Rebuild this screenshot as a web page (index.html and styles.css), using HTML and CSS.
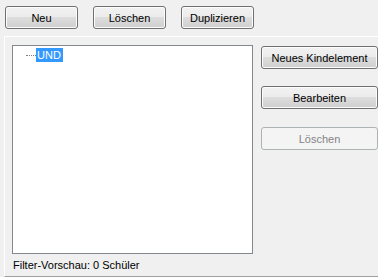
FILE: index.html
```html
<!DOCTYPE html>
<html lang="de">
<head>
  <meta charset="UTF-8">
  <title>Filter</title>
  <link rel="stylesheet" href="styles.css">
</head>
<body>
<div class="toolbar">
  <button class="btn btn-small" type="button">Neu</button>
  <button class="btn btn-small" type="button">Löschen</button>
  <button class="btn btn-small" type="button">Duplizieren</button>
</div>
<div class="group">
  <div class="main">
    <div class="tree">
      <div class="node">
        <span class="dots"></span>
        <span class="selected">UND</span>
      </div>
    </div>
    <div class="actions">
      <button class="btn" type="button">Neues Kindelement</button>
      <button class="btn" type="button">Bearbeiten</button>
      <button class="btn" type="button" disabled>Löschen</button>
    </div>
  </div>
  <div class="preview">
    <span class="preview-label">Filter-Vorschau:</span><span>0 Schüler</span>
  </div>
</div>
</body>
</html>
```

FILE: styles.css
```css
html,
body {
  margin: 0;
  height: 277px;
  overflow: hidden;
}

body {
  background: #f0f0f0;
  font-family: 'Liberation Sans', Arial, sans-serif;
  font-size: 11px;
  color: #000;
}

.toolbar {
  display: flex;
  gap: 15px;
  padding: 6px 0 0 5px;
}

.btn {
  height: 23px;
  padding: 0;
  border: 1px solid #707070;
  border-radius: 3px;
  background: linear-gradient(#f2f2f2 0%, #ebebeb 50%, #dddddd 50%, #cfcfcf 100%);
  box-shadow: inset 0 0 0 1px #fcfcfc;
  font-family: inherit;
  font-size: 11px;
  color: #000;
  -webkit-appearance: none;
  appearance: none;
}

.btn:disabled {
  border-color: #adb2b5;
  background: #f4f4f4;
  box-shadow: none;
  color: #838383;
}

.btn-small {
  width: 73px;
}

.group {
  margin: 7px 0 0 4px;
  height: 239px;
  border-top: 1px solid #fff;
  border-left: 1px solid #fff;
  border-bottom: 1px solid #a0a0a0;
  padding: 8px 0 0 7px;
  box-sizing: border-box;
  height: 241px;
}

.main {
  display: flex;
  gap: 8px;
}

.tree {
  width: 241px;
  height: 209px;
  box-sizing: border-box;
  border: 1px solid #828790;
  background: #fff;
  padding: 2px 0 0 13px;
}

.node {
  display: flex;
  align-items: center;
  height: 14px;
}

.dots {
  width: 10px;
  border-top: 1px dotted #808080;
  margin-top: 1px;
}

.selected {
  background: #3399ff;
  color: #fff;
  line-height: 14px;
  padding: 0 2px 0 1px;
}

.actions {
  display: flex;
  flex-direction: column;
  gap: 17px;
  width: 117px;
  padding-top: 1px;
}

.actions .btn:last-child {
  margin-top: 1px;
}

.preview {
  margin-top: 5px;
  padding-left: 1px;
  line-height: 13px;
}

.preview-label {
  display: inline-block;
  width: 80px;
}
```
